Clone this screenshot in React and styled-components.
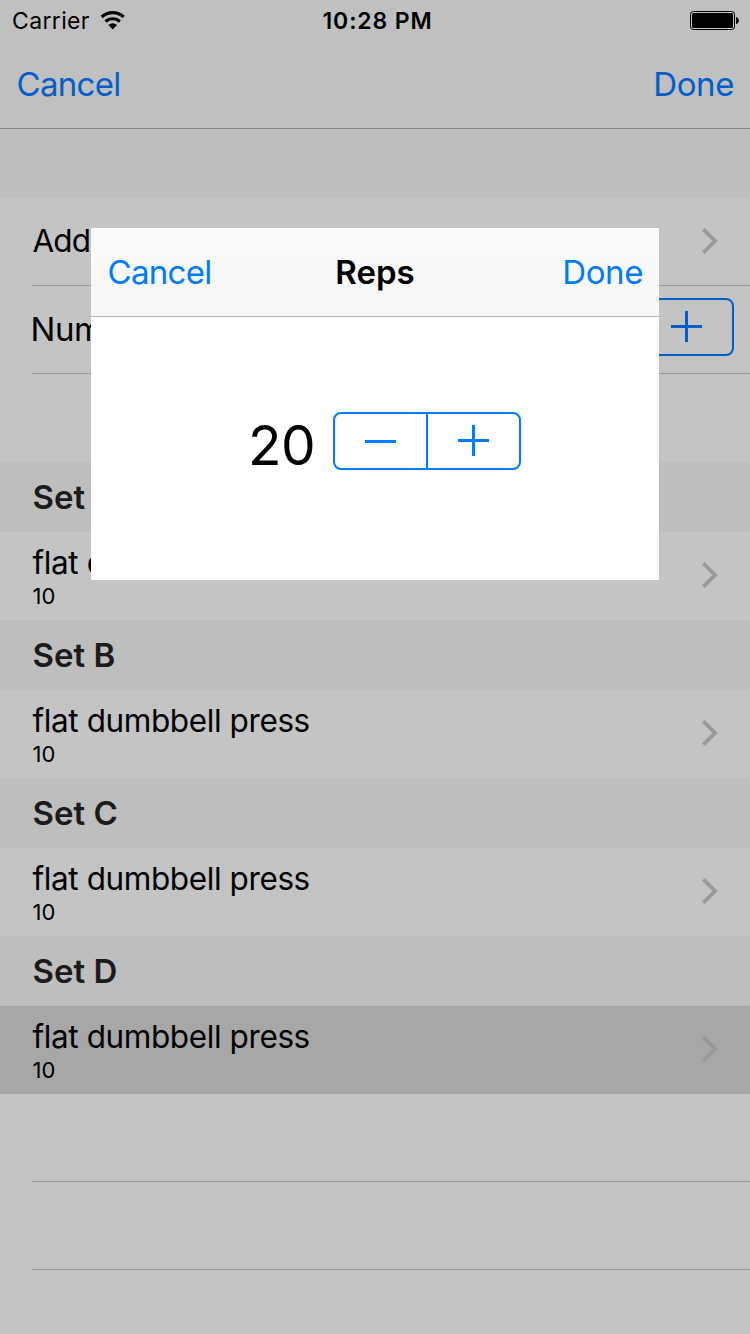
import React from "react";
import styled, { createGlobalStyle } from "styled-components";

const GlobalStyle = createGlobalStyle`
  * { box-sizing: border-box; }
  body {
    margin: 0;
    background: #c4c4c4;
    font-family: Inter, "Liberation Sans", sans-serif;
    color: #000;
  }
  button { font: inherit; color: inherit; background: none; border: 0; padding: 0; margin: 0; }
`;

const Screen = styled.div`
  position: relative;
  width: 750px;
  height: 1334px;
  overflow: hidden;
  background: #c4c4c4;
`;

const StatusBar = styled.div`
  display: grid;
  grid-template-columns: 1fr auto 1fr;
  align-items: center;
  height: 40px;
  padding: 0 11px 0 12px;
  background: #c0c0c0;
  font-size: 23px;
  line-height: 38px;
`;

const Carrier = styled.div`
  display: flex;
  align-items: center;
  gap: 10px;
  letter-spacing: 0.35px;
`;

const StatusText = styled.span`
  padding-top: 2px;
`;

const Clock = styled.div`
  font-weight: 600;
  letter-spacing: 0.85px;
  padding: 2px 0 0 4px;
`;

const BatterySlot = styled.div`
  display: flex;
  justify-content: flex-end;
  padding-top: 1px;
`;

const NavBar = styled.header`
  display: grid;
  grid-template-columns: 1fr auto 1fr;
  align-items: center;
  height: 89px;
  padding: 0 16px;
  background: ${(p) => (p.$active ? "linear-gradient(#fafafa, #f7f7f7)" : "#c0c0c0")};
  border-bottom: 1px solid ${(p) => (p.$active ? "#b2b2b2" : "#868686")};
  color: ${(p) => (p.$active ? "#007aff" : "#005fc8")};
`;

const NavAction = styled.button`
  justify-self: ${(p) => p.$side};
  padding-left: ${(p) => (p.$side === "start" ? "0.5px" : "0")};
  font-size: 33px;
  line-height: 88px;
  letter-spacing: ${(p) => (p.$side === "start" ? "-0.7px" : "-0.4px")};
`;

const NavTitle = styled.div`
  font-size: 33px;
  font-weight: 600;
  line-height: 88px;
  color: #000;
`;

const GroupGap = styled.div`
  height: 69px;
  background: #bebebe;
`;

const SectionHeader = styled.div`
  height: 70px;
  padding-left: 32.6px;
  background: #bebebe;
  color: #1b1b1b;
  font-size: 33px;
  font-weight: 600;
  line-height: 70px;
`;

const Row = styled.div`
  display: flex;
  align-items: center;
  justify-content: space-between;
  height: 88px;
  padding: 0 16px 0 32px;
  background: ${(p) => (p.$selected ? "#a7a7a7" : "#c4c4c4")};
`;

const LinedRow = styled.div`
  display: flex;
  align-items: center;
  justify-content: space-between;
  height: 88px;
  margin-left: 32px;
  padding-right: 16px;
  border-bottom: 1px solid #9b9b9d;
`;

const RowLabel = styled.div`
  font-size: ${(p) => p.$size || 31.5}px;
  line-height: 40px;
  letter-spacing: ${(p) => p.$tracking || "-0.4px"};
  margin: ${(p) => p.$nudge || "0"};
`;

const Exercise = styled.div`
  padding: 0 0 1px 0.5px;
`;

const RepCount = styled.div`
  font-size: 22px;
  line-height: 26px;
`;

const ChevronSlot = styled.div`
  display: flex;
  margin: 0 15px 2px 0;
`;

const StepperFrame = styled.div`
  display: flex;
  width: 188px;
  height: 58px;
  border: 2px solid currentColor;
  border-radius: 8px;
  color: ${(p) => (p.$dimmed ? "#005fc8" : "#007aff")};
  margin: ${(p) => p.$offset || "0"};
`;

const StepButton = styled.button`
  display: flex;
  flex: 1;
  align-items: flex-start;
  justify-content: center;
  padding-top: 11px;
  & + & { border-left: 2px solid currentColor; }
`;

const Modal = styled.section`
  position: absolute;
  left: 91px;
  top: 228px;
  width: 568px;
  height: 352px;
  background: #fff;
`;

const ModalBody = styled.div`
  display: flex;
  align-items: flex-start;
  padding: 95px 0 0 157px;
`;

const RepValue = styled.div`
  width: 85px;
  font-size: 55px;
  line-height: 66px;
  letter-spacing: -0.5px;
`;

const Wifi = () => (
  <svg width="26" height="20" viewBox="0 0 26 20" fill="none" stroke="#000">
    <path d="M1.7 7 A16 16 0 0 1 23.7 7" strokeWidth="3.1" />
    <path d="M5.6 11.6 A10.2 10.2 0 0 1 19.8 11.6" strokeWidth="3.1" />
    <path d="M12.7 19.5 L8.4 15 A6.2 6.2 0 0 1 17 15 Z" fill="#000" stroke="none" />
  </svg>
);

const Battery = () => (
  <svg width="49" height="19" viewBox="0 0 49 19">
    <rect x="0.5" y="0.5" width="44" height="18" rx="2.8" fill="none" stroke="#000" />
    <rect x="2" y="2" width="41" height="15" rx="1.5" fill="#000" />
    <path d="M46 6 C49.8 6.6 49.8 12.4 46 13 Z" fill="#000" />
  </svg>
);

const Chevron = () => (
  <ChevronSlot>
    <svg width="18" height="28" viewBox="0 0 18 28" fill="none" stroke="#99999d" strokeWidth="3.8">
      <path d="M2.4 2.3 L14.1 14 L2.4 25.7" />
    </svg>
  </ChevronSlot>
);

const Stepper = ({ dimmed, offset }) => (
  <StepperFrame $dimmed={dimmed} $offset={offset}>
    <StepButton aria-label="Decrease">
      <svg width="31" height="31" viewBox="0 0 31 31">
        <rect y="15" width="31" height="3" fill="currentColor" />
      </svg>
    </StepButton>
    <StepButton aria-label="Increase">
      <svg width="31" height="31" viewBox="0 0 31 31" fill="currentColor">
        <rect y="14" width="31" height="3" />
        <rect x="14" width="3" height="31" />
      </svg>
    </StepButton>
  </StepperFrame>
);

const sets = [
  { name: "Set A", exercise: "flat dumbbell press", reps: 10 },
  { name: "Set B", exercise: "flat dumbbell press", reps: 10 },
  { name: "Set C", exercise: "flat dumbbell press", reps: 10 },
  { name: "Set D", exercise: "flat dumbbell press", reps: 10, selected: true },
];

export default function App() {
  return (
    <>
      <GlobalStyle />
      <Screen>
        <StatusBar>
          <Carrier><StatusText>Carrier</StatusText><Wifi /></Carrier>
          <Clock>10:28 PM</Clock>
          <BatterySlot><Battery /></BatterySlot>
        </StatusBar>
        <NavBar>
          <NavAction $side="start">Cancel</NavAction>
          <span />
          <NavAction $side="end">Done</NavAction>
        </NavBar>
        <GroupGap />
        <LinedRow>
          <RowLabel $tracking="-0.9px" $nudge="0 0 1px 0.5px">Add</RowLabel>
          <Chevron />
        </LinedRow>
        <LinedRow>
          <RowLabel $size={33} $nudge="0 0 1px -1.5px">Num</RowLabel>
          <Stepper dimmed offset="0 0 5px" />
        </LinedRow>
        <Row />
        {sets.map((s) => (
          <React.Fragment key={s.name}>
            <SectionHeader>{s.name}</SectionHeader>
            <Row $selected={s.selected}>
              <Exercise>
                <RowLabel>{s.exercise}</RowLabel>
                <RepCount>{s.reps}</RepCount>
              </Exercise>
              <Chevron />
            </Row>
          </React.Fragment>
        ))}
        <LinedRow />
        <LinedRow />
        <Modal>
          <NavBar $active>
            <NavAction $side="start">Cancel</NavAction>
            <NavTitle>Reps</NavTitle>
            <NavAction $side="end">Done</NavAction>
          </NavBar>
          <ModalBody>
            <RepValue>20</RepValue>
            <Stepper />
          </ModalBody>
        </Modal>
      </Screen>
    </>
  );
}
